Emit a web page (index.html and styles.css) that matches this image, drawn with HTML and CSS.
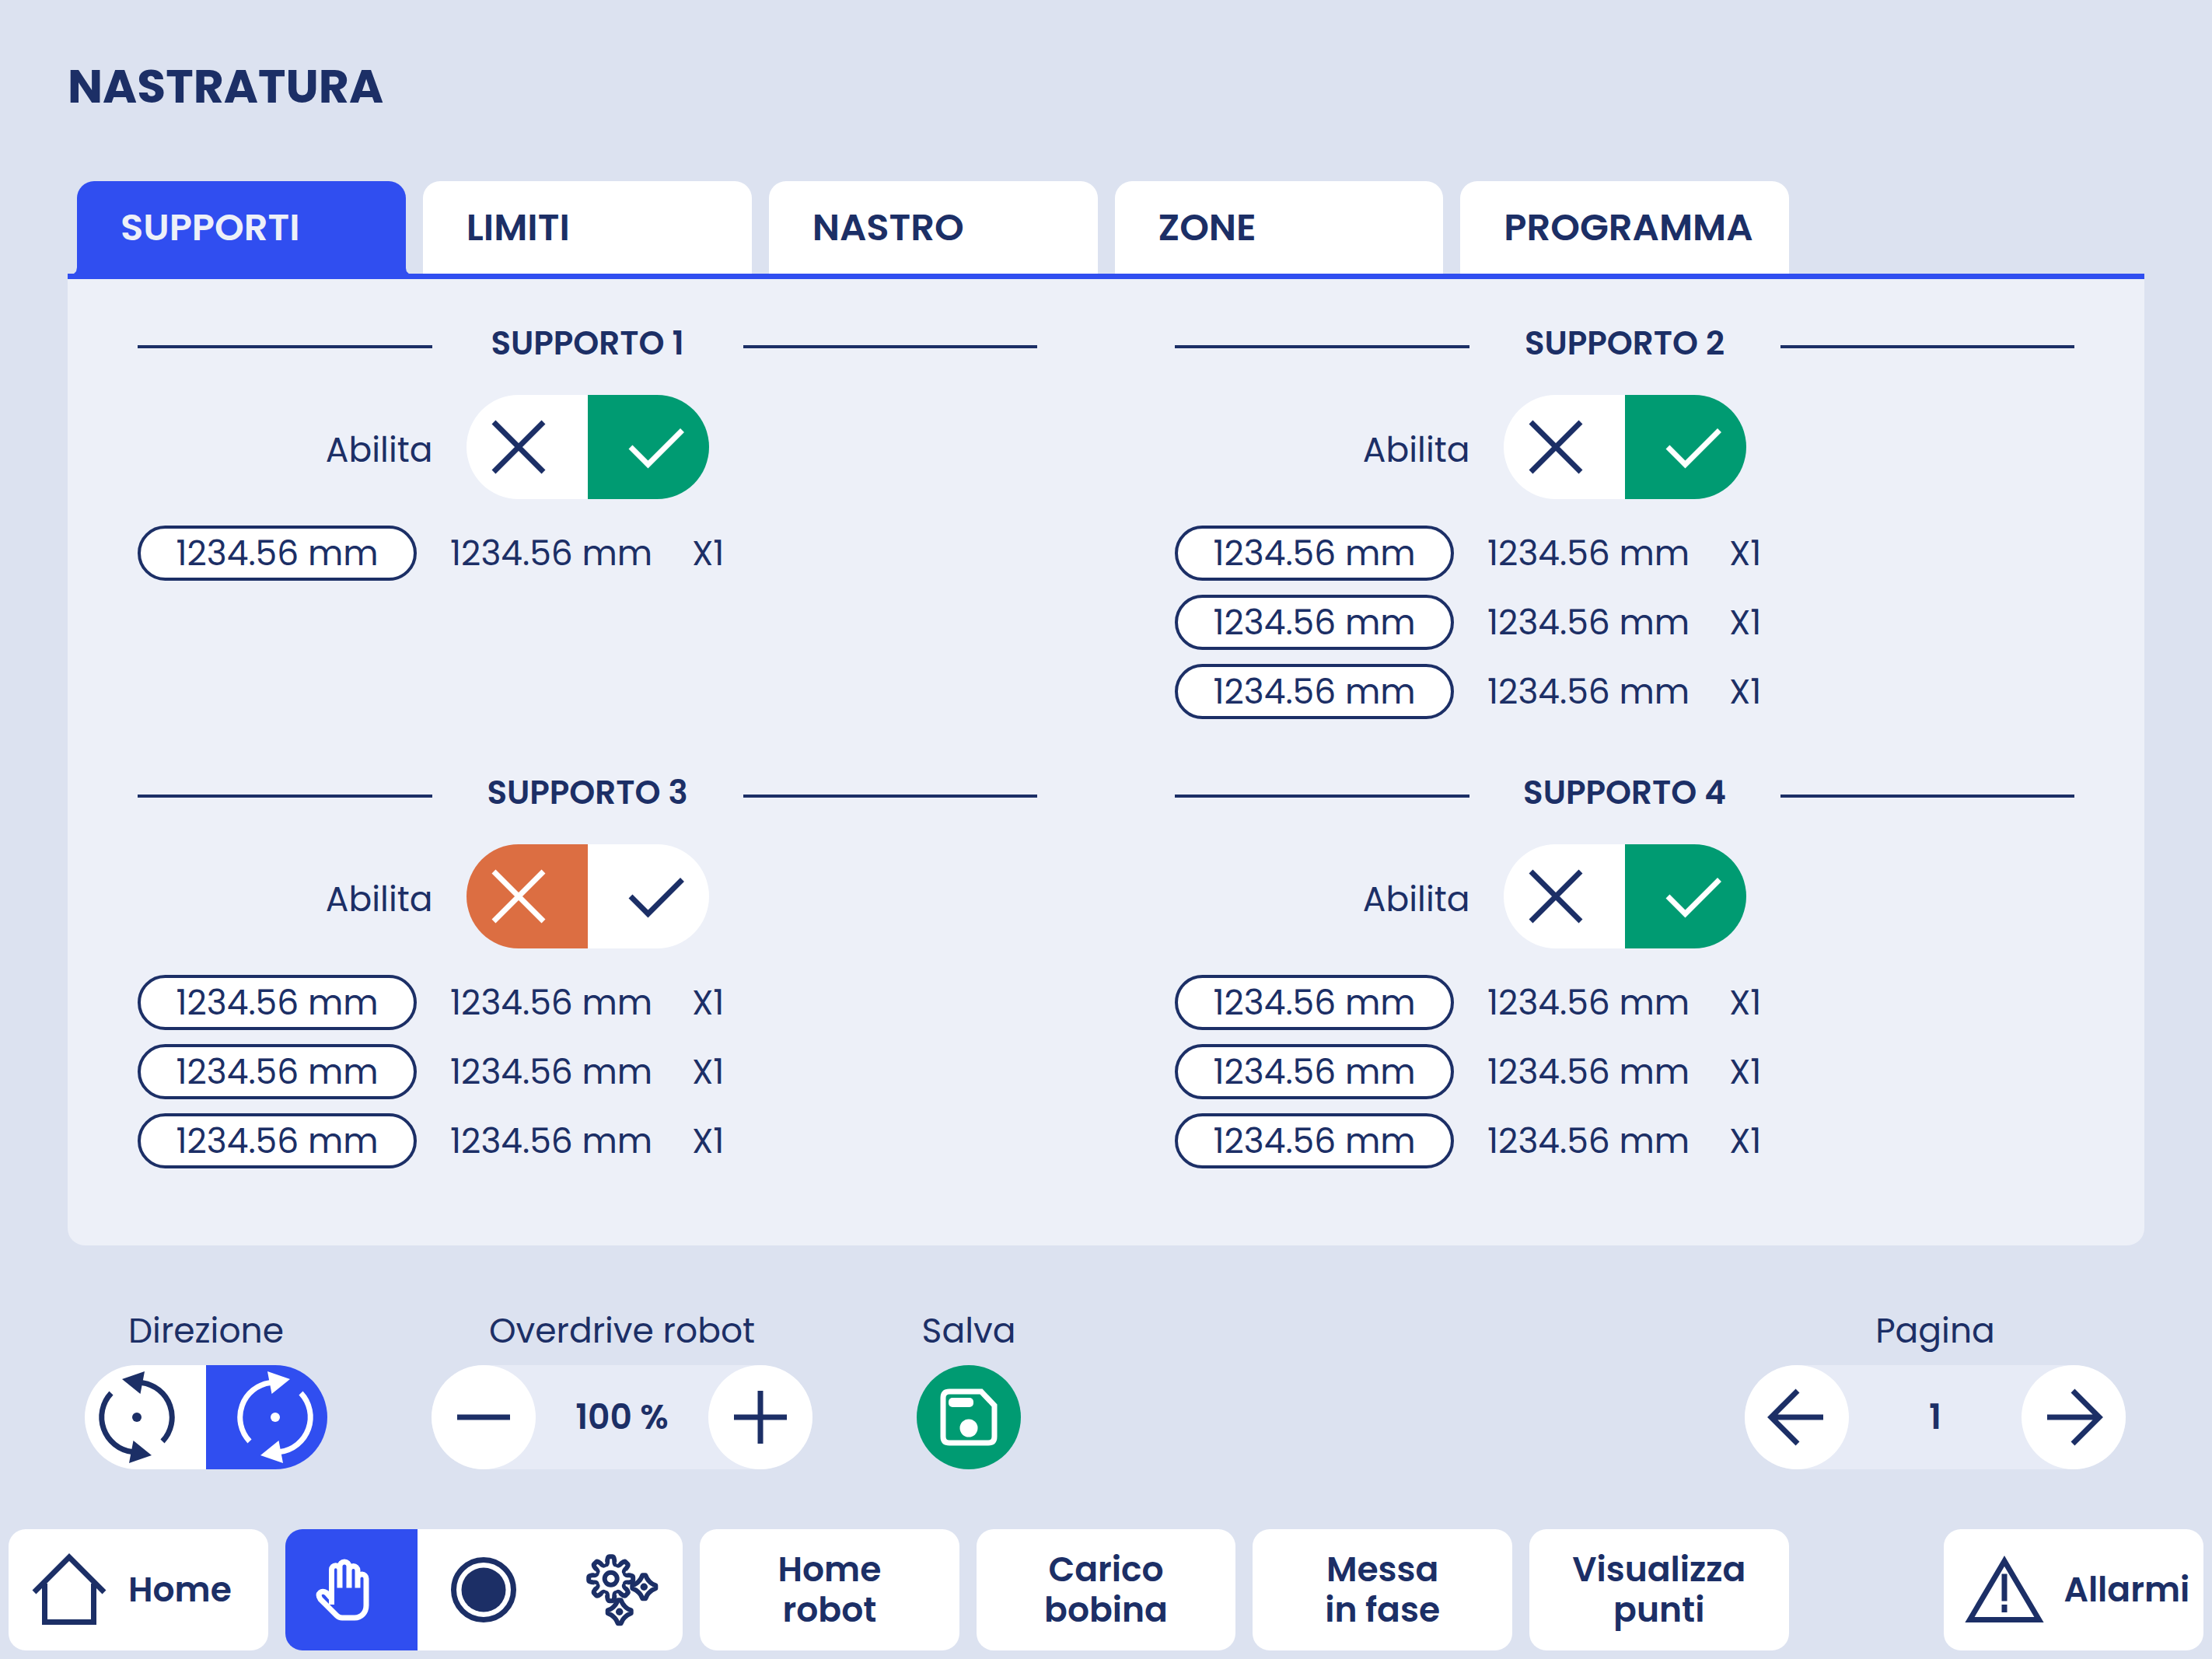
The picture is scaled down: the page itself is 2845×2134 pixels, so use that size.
FILE: index.html
```html
<!DOCTYPE html>
<html lang="it">
<head>
<meta charset="utf-8">
<meta name="viewport" content="width=device-width, initial-scale=1">
<title>Nastratura</title>
<link rel="stylesheet" href="styles.css">
</head>
<body>
<svg class="sprite" aria-hidden="true">
  <symbol id="cross" viewBox="0 0 100 100"><path d="M18 18 82 82M82 18 18 82"/></symbol>
  <symbol id="check" viewBox="0 0 100 100"><path d="M16 50 38.5 72.5 82.5 28.5"/></symbol>
  <symbol id="half-turn" viewBox="-60 -60 120 120"><path d="M6 -44.5A45 45 0 0 1 33 31"/><path class="solid" d="M-19 -49 10 -59 4.5 -30Z"/></symbol>
  <symbol id="turn" viewBox="-60 -60 120 120">
    <use href="#half-turn" x="-60" y="-60" width="120" height="120"/>
    <use href="#half-turn" x="-60" y="-60" width="120" height="120" transform="rotate(180)"/>
    <circle class="solid" r="6"/>
  </symbol>
  <symbol id="star" viewBox="-20 -20 40 40">
    <path d="M-2 -15H2Q4 -9.5 7 -7Q9.5 -4 15 -2V2Q9.5 4 7 7Q4 9.5 2 15H-2Q-4 9.5 -7 7Q-9.5 4 -15 2V-2Q-9.5 -4 -7 -7Q-4 -9.5 -2 -15Z"/>
    <circle class="solid" r="4.7"/>
  </symbol>
</svg>

<header class="page-header"><h1>NASTRATURA</h1></header>

<main class="content">
  <div class="tabs" role="tablist">
    <button class="tab" type="button" role="tab" aria-selected="true">SUPPORTI</button>
    <button class="tab" type="button" role="tab" aria-selected="false">LIMITI</button>
    <button class="tab" type="button" role="tab" aria-selected="false">NASTRO</button>
    <button class="tab" type="button" role="tab" aria-selected="false">ZONE</button>
    <button class="tab" type="button" role="tab" aria-selected="false">PROGRAMMA</button>
  </div>

  <div class="panel" role="tabpanel">
    <section class="support">
      <h2>SUPPORTO 1</h2>
      <div class="enable">
        <span class="enable-label" id="en1">Abilita</span>
        <div class="toggle" role="radiogroup" aria-labelledby="en1">
          <label class="off"><input type="radio" name="en1" aria-label="No"><svg class="icon"><use href="#cross"/></svg></label>
          <label class="on"><input type="radio" name="en1" aria-label="Sì" checked><svg class="icon"><use href="#check"/></svg></label>
        </div>
      </div>
      <div class="rows">
        <div class="row"><input type="text" aria-label="Quota 1" value="1234.56 mm"><span>1234.56 mm</span><span>X1</span></div>
      </div>
    </section>

    <section class="support">
      <h2>SUPPORTO 2</h2>
      <div class="enable">
        <span class="enable-label" id="en2">Abilita</span>
        <div class="toggle" role="radiogroup" aria-labelledby="en2">
          <label class="off"><input type="radio" name="en2" aria-label="No"><svg class="icon"><use href="#cross"/></svg></label>
          <label class="on"><input type="radio" name="en2" aria-label="Sì" checked><svg class="icon"><use href="#check"/></svg></label>
        </div>
      </div>
      <div class="rows">
        <div class="row"><input type="text" aria-label="Quota 1" value="1234.56 mm"><span>1234.56 mm</span><span>X1</span></div>
        <div class="row"><input type="text" aria-label="Quota 2" value="1234.56 mm"><span>1234.56 mm</span><span>X1</span></div>
        <div class="row"><input type="text" aria-label="Quota 3" value="1234.56 mm"><span>1234.56 mm</span><span>X1</span></div>
      </div>
    </section>

    <section class="support">
      <h2>SUPPORTO 3</h2>
      <div class="enable">
        <span class="enable-label" id="en3">Abilita</span>
        <div class="toggle" role="radiogroup" aria-labelledby="en3">
          <label class="off"><input type="radio" name="en3" aria-label="No" checked><svg class="icon"><use href="#cross"/></svg></label>
          <label class="on"><input type="radio" name="en3" aria-label="Sì"><svg class="icon"><use href="#check"/></svg></label>
        </div>
      </div>
      <div class="rows">
        <div class="row"><input type="text" aria-label="Quota 1" value="1234.56 mm"><span>1234.56 mm</span><span>X1</span></div>
        <div class="row"><input type="text" aria-label="Quota 2" value="1234.56 mm"><span>1234.56 mm</span><span>X1</span></div>
        <div class="row"><input type="text" aria-label="Quota 3" value="1234.56 mm"><span>1234.56 mm</span><span>X1</span></div>
      </div>
    </section>

    <section class="support">
      <h2>SUPPORTO 4</h2>
      <div class="enable">
        <span class="enable-label" id="en4">Abilita</span>
        <div class="toggle" role="radiogroup" aria-labelledby="en4">
          <label class="off"><input type="radio" name="en4" aria-label="No"><svg class="icon"><use href="#cross"/></svg></label>
          <label class="on"><input type="radio" name="en4" aria-label="Sì" checked><svg class="icon"><use href="#check"/></svg></label>
        </div>
      </div>
      <div class="rows">
        <div class="row"><input type="text" aria-label="Quota 1" value="1234.56 mm"><span>1234.56 mm</span><span>X1</span></div>
        <div class="row"><input type="text" aria-label="Quota 2" value="1234.56 mm"><span>1234.56 mm</span><span>X1</span></div>
        <div class="row"><input type="text" aria-label="Quota 3" value="1234.56 mm"><span>1234.56 mm</span><span>X1</span></div>
      </div>
    </section>
  </div>
</main>

<div class="controls">
  <div class="control">
    <span id="dir">Direzione</span>
    <div class="toggle direction" role="radiogroup" aria-labelledby="dir">
      <label><input type="radio" name="dir" aria-label="Antioraria"><svg class="icon large"><use href="#turn"/></svg></label>
      <label><input type="radio" name="dir" aria-label="Oraria" checked><svg class="icon large mirrored"><use href="#turn"/></svg></label>
    </div>
  </div>

  <div class="control">
    <span id="over">Overdrive robot</span>
    <div class="stepper" role="group" aria-labelledby="over">
      <button class="round" type="button" aria-label="Diminuisci"><svg class="icon" viewBox="0 0 100 100"><path d="M16 50H84"/></svg></button>
      <output>100 %</output>
      <button class="round" type="button" aria-label="Aumenta"><svg class="icon" viewBox="0 0 100 100"><path d="M16 50H84M50 16V84"/></svg></button>
    </div>
  </div>

  <div class="control">
    <span id="save">Salva</span>
    <button class="round save" type="button" aria-labelledby="save">
      <svg class="icon" viewBox="0 0 100 100">
        <path d="M25 17H66L83 35V75Q83 83 75 83H25Q17 83 17 75V25Q17 17 25 17Z"/>
        <rect class="solid" x="24" y="25" width="32" height="12" rx="5"/>
        <circle class="solid" cx="50" cy="64" r="11.5"/>
      </svg>
    </button>
  </div>

  <div class="control last">
    <span id="page">Pagina</span>
    <div class="stepper" role="group" aria-labelledby="page">
      <button class="round" type="button" aria-label="Pagina precedente"><svg class="icon" viewBox="0 0 100 100"><path d="M84 50H16M51 16 17 50 51 84"/></svg></button>
      <output>1</output>
      <button class="round" type="button" aria-label="Pagina successiva"><svg class="icon" viewBox="0 0 100 100"><path d="M16 50H84M49 16 83 50 49 84"/></svg></button>
    </div>
  </div>
</div>

<nav class="bottom-bar">
  <button class="key with-icon" type="button">
    <svg class="icon" viewBox="0 0 100 100"><path d="M5 53 50 8 95 53M18.500 42V91.500H81.500V42"/></svg>
    Home
  </button>
  <div class="modes" role="radiogroup" aria-label="Modalità">
    <label>
      <input type="radio" name="mode" aria-label="Manuale" checked>
      <svg class="icon" viewBox="6 0 100 100"><path d="M30.500 69V24a5.250 5.250 0 0 1 10.500 0V47.500M41 24V20a6 6 0 0 1 12 0V47.500M53 25a5.500 5.500 0 0 1 11 0V47.500M64 35.500a5.500 5.500 0 0 1 11 0V70C75 79 69 86 60 86H44Q40 86 37 83L16 62C11 54 18 50 24 54L31 62"/></svg>
    </label>
    <label>
      <input type="radio" name="mode" aria-label="Registra">
      <svg class="icon" viewBox="0 0 100 100"><circle cx="50" cy="50" r="38.500"/><circle class="solid" cx="50" cy="50" r="28.500"/></svg>
    </label>
    <label>
      <input type="radio" name="mode" aria-label="Automatico">
      <svg class="icon gears" viewBox="0 0 100 100">
        <defs><path id="tooth" d="M-7.650 -18.500C-4.500 -17.500 -4.500 -21 -4.500 -24Q-4 -28.500 -2 -28.500H2Q4 -28.500 4.500 -24C4.500 -21 4.500 -17.500 7.650 -18.500"/></defs>
        <g transform="translate(42.700 35.700)">
          <use href="#tooth"/><use href="#tooth" transform="rotate(45)"/><use href="#tooth" transform="rotate(90)"/><use href="#tooth" transform="rotate(135)"/>
          <use href="#tooth" transform="rotate(180)"/><use href="#tooth" transform="rotate(225)"/><use href="#tooth" transform="rotate(270)"/><use href="#tooth" transform="rotate(315)"/>
          <circle r="8"/>
        </g>
        <use href="#star" x="65.300" y="26.300" width="40" height="40"/>
        <use href="#star" x="33.700" y="58.300" width="40" height="40"/>
      </svg>
    </label>
  </div>
  <button class="key" type="button">Home<br>robot</button>
  <button class="key" type="button">Carico<br>bobina</button>
  <button class="key" type="button">Messa<br>in fase</button>
  <button class="key" type="button">Visualizza<br>punti</button>
  <button class="key with-icon alarms" type="button">
    <svg class="icon" viewBox="0 0 100 100"><path d="M50 13 5.500 88.500H94.500ZM50 29.500V64.500M50 69V79"/></svg>
    Allarmi
  </button>
</nav>
</body>
</html>
```

FILE: styles.css
```css
:root {
  --ink: #1c2f66;
  --blue: #304ef0;
  --green: #009b72;
  --orange: #dc6e42;
  --page: #dce2f0;
  --panel: #edf0f8;
  --track: #e7ebf6;
}

* { box-sizing: border-box; }

body {
  margin: 0;
  min-height: 100vh;
  display: flex;
  flex-direction: column;
  background: var(--page);
  color: var(--ink);
  font: 400 44px/52px Poppins, Inter, "Open Sans", sans-serif;
  font-feature-settings: "cv11";
}

button, input, output {
  font: inherit;
  font-feature-settings: inherit;
  color: inherit;
}

button {
  border: 0;
  padding: 0;
  background: #fff;
  cursor: pointer;
}

.sprite { display: none; }

.icon {
  width: 100px;
  height: 100px;
  flex: none;
  fill: none;
  stroke: currentColor;
  stroke-width: 7;
  overflow: visible;
}
.icon.large { width: 120px; height: 120px; }
.icon.mirrored { transform: scaleX(-1); }
.icon.gears { stroke-width: 6; stroke-linejoin: round; }
.solid { fill: currentColor; stroke: none; }

.page-header { padding: 75px 87px 86px; }

h1 {
  margin: 0;
  font-size: 60px;
  line-height: 72px;
  font-weight: 700;
}

.content { padding: 0 87px; }

.tabs {
  display: grid;
  grid-template-columns: repeat(6, 1fr);
  gap: 22px;
  padding: 0 12px;
}

.tab {
  height: 119px;
  padding: 0 0 0 56px;
  border-radius: 22px 22px 0 0;
  text-align: left;
  font-size: 48px;
  font-weight: 600;
}
.tab[aria-selected="true"] {
  position: relative;
  background: var(--blue);
  color: var(--panel);
}
/* small foot that joins the active tab to the line below */
.tab[aria-selected="true"]::after {
  content: "";
  position: absolute;
  inset: auto -4px 0;
  height: 8px;
  background: var(--blue);
  clip-path: polygon(4px 0, calc(100% - 4px) 0, calc(100% - 3px) 5px, 100% 100%, 0 100%, 3px 5px);
}

.panel {
  display: grid;
  grid-template-columns: 1fr 1fr;
  gap: 69px 177px;
  padding: 57px 90px 99px;
  border-top: 7px solid var(--blue);
  border-radius: 0 0 22px 22px;
  background: var(--panel);
}

h2 {
  display: grid;
  grid-template-columns: 1fr 400px 1fr;
  align-items: center;
  margin: 0 0 40px;
  font-size: 42px;
  line-height: 52px;
  font-weight: 600;
  text-align: center;
}
h2::before, h2::after {
  content: "";
  height: 4px;
  margin-top: 8px;
  background: var(--ink);
}

.enable {
  display: grid;
  grid-template-columns: 1fr auto 1fr;
  align-items: center;
  gap: 43px;
  margin-bottom: 34px;
}
.enable-label { padding-top: 8px; text-align: right; }

.toggle {
  display: grid;
  grid-template-columns: 1fr 1fr;
  width: 312px;
  height: 134px;
  border-radius: 67px;
  overflow: hidden;
}
.toggle label, .modes label {
  display: grid;
  place-items: center;
  cursor: pointer;
}
.toggle input, .modes input, .toggle .icon, .modes .icon { grid-area: 1 / 1; }
.toggle input, .modes input {
  appearance: none;
  margin: 0;
  width: 100%;
  height: 100%;
  background: #fff;
}
.toggle .icon, .modes .icon { z-index: 1; }
.toggle label:first-child .icon { margin-right: 22px; }
.toggle label:last-child .icon { margin-left: 22px; }
.toggle input:checked, .modes input:checked { background: var(--blue); }
.toggle .on input:checked { background: var(--green); }
.toggle .off input:checked { background: var(--orange); }
input:checked + .icon { color: #fff; }

.rows { display: grid; gap: 18px; }
.row {
  display: grid;
  grid-template-columns: 359px 268px auto;
  align-items: center;
  gap: 43px;
}
.row input {
  width: 100%;
  height: 71px;
  padding: 0;
  border: 4px solid var(--ink);
  border-radius: 36px;
  background: #fff;
  text-align: center;
}

.controls {
  display: flex;
  gap: 134px;
  padding: 84px 111px 0 109px;
}
.control {
  display: flex;
  flex-direction: column;
  align-items: center;
  gap: 18px;
}
.control.last { margin-left: auto; }

.stepper {
  display: flex;
  align-items: center;
  width: 490px;
  border-radius: 67px;
  background: var(--track);
}
.stepper output {
  flex: 1;
  text-align: center;
  font-weight: 600;
}

.round {
  display: grid;
  place-items: center;
  width: 134px;
  height: 134px;
  border-radius: 50%;
}
.save { background: var(--green); color: #fff; }

.bottom-bar {
  display: grid;
  grid-template-columns: repeat(16, 1fr);
  gap: 22px;
  margin-top: auto;
  padding: 11px;
}
.key, .modes {
  height: 156px;
  border-radius: 22px;
}
.key {
  grid-column: span 2;
  font-weight: 600;
}
.key.with-icon {
  display: flex;
  align-items: center;
  gap: 26px;
  padding-left: 28px;
}
.key.alarms { grid-column: 15 / span 2; }
.modes {
  grid-column: span 3;
  display: grid;
  grid-template-columns: repeat(3, 1fr);
  overflow: hidden;
}
```
